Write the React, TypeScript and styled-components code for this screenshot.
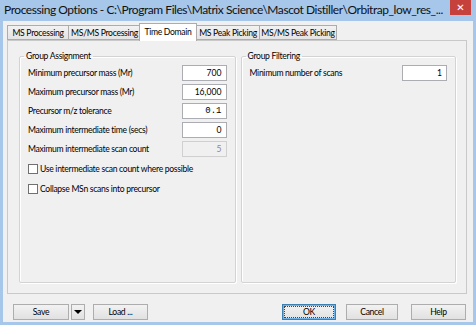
import React from "react";
import styled, { createGlobalStyle } from "styled-components";

const Global = createGlobalStyle`
  html, body { margin: 0; padding: 0; background: #fff; }
  body { font-family: Lato, "Open Sans", sans-serif; }
  * { box-sizing: border-box; }
`;

const Window = styled.div`
  width: 476px;
  height: 325px;
  background: #a6c6ea;
  display: flex;
  flex-direction: column;
  overflow: hidden;
`;

const TitleBar = styled.div`
  height: 21px;
  display: flex;
  align-items: flex-start;
  flex-shrink: 0;
`;

const Title = styled.div`
  flex: 1;
  padding: 1px 0 0 4px;
  font-family: Lato, sans-serif;
  font-size: 12px;
  letter-spacing: -0.45px;
  line-height: 18px;
  color: #111;
  white-space: nowrap;
  overflow: hidden;
`;

const CloseBtn = styled.div`
  width: 21px;
  height: 15px;
  margin-right: 5px;
  background: #c7413c;
  color: #fff;
  font-family: "DejaVu Sans", sans-serif;
  font-size: 10px;
  line-height: 15px;
  text-align: center;
  font-weight: bold;
`;

const Body = styled.div`
  flex: 1;
  margin: 0 3px 3px 3px;
  background: #f0f0f0;
  padding: 2px 6px 2px 4px;
  display: flex;
  flex-direction: column;
  font-size: 8.6px;
  letter-spacing: -0.3px;
  color: #000;
`;

const TabStrip = styled.div`
  display: flex;
  align-items: flex-end;
  height: 17px;
  position: relative;
  z-index: 1;
`;

const Tab = styled.div<{ $w: number; $active?: boolean }>`
  width: ${(p) => p.$w}px;
  height: ${(p) => (p.$active ? 18 : 15)}px;
  margin: ${(p) => (p.$active ? "0 -1px -1px -1px" : "0 -1px 0 0")};
  border: 1px solid #acacac;
  border-bottom: ${(p) => (p.$active ? "none" : "1px solid #acacac")};
  background: ${(p) => (p.$active ? "#fff" : "linear-gradient(#f2f2f2, #e4e4e4)")};
  display: flex;
  align-items: center;
  justify-content: center;
  padding-top: ${(p) => (p.$active ? "0" : "1px")};
  padding-bottom: ${(p) => (p.$active ? "2px" : "0")};
  white-space: nowrap;
  position: relative;
  z-index: ${(p) => (p.$active ? 2 : 1)};
`;

const Panel = styled.div`
  height: 254px;
  border: 1px solid #c9c9c9;
  background: #f0f0f0;
  display: flex;
  gap: 5px;
  padding: 9px 10px 10px 11px;
`;

const Group = styled.fieldset<{ $w: number }>`
  width: ${(p) => p.$w}px;
  margin: 0;
  border: 1px solid #d3d3d3;
  box-shadow: inset 1px 1px 0 #fff, 1px 1px 0 #fff;
  border-radius: 2px;
  padding: 1px 8px 0 8px;
  display: flex;
  flex-direction: column;
  gap: 2px;
`;

const Legend = styled.legend`
  padding: 0 2px;
  margin-left: -4px;
  line-height: 13px;
  font-size: 8.6px;
`;

const Row = styled.div`
  height: 17px;
  display: flex;
  align-items: center;
  justify-content: space-between;
  padding-top: 1px;
`;

const Field = styled.div<{ $w: number; $disabled?: boolean }>`
  width: ${(p) => p.$w}px;
  height: 16px;
  border: 1px solid ${(p) => (p.$disabled ? "#d0d0d0" : "#abadb3")};
  background: ${(p) => (p.$disabled ? "#f0f0f0" : "#fff")};
  color: ${(p) => (p.$disabled ? "#8a8a8a" : "#000")};
  text-align: right;
  padding-right: 4px;
  line-height: 14px;
  margin-top: -1px;
  letter-spacing: 0;
`;

const MonoField = styled(Field)`
  font-family: "Liberation Mono", "DejaVu Sans Mono", monospace;
  font-size: 9px;
`;

const CheckRow = styled.label`
  height: 20px;
  display: flex;
  align-items: center;
  gap: 2px;
`;

const CheckBoxes = styled.div`
  display: flex;
  flex-direction: column;
`;

const Box = styled.span`
  width: 10px;
  height: 10px;
  border: 1px solid #707070;
  background: #fff;
  display: inline-block;
`;

const Buttons = styled.div`
  margin-top: 10px;
  height: 16px;
  display: flex;
  align-items: stretch;
  padding-left: 6px;
  padding-right: 1px;
`;

const Btn = styled.div<{ $w: number; $gap?: number; $default?: boolean }>`
  width: ${(p) => p.$w}px;
  margin-left: ${(p) => p.$gap ?? 0}px;
  border: 1px solid ${(p) => (p.$default ? "#3c7fb1" : "#adadad")};
  background: linear-gradient(#f2f2f2, #e1e1e1);
  display: flex;
  align-items: center;
  justify-content: center;
  ${(p) =>
    p.$default
      ? `box-shadow: inset 0 0 0 1px #6fb3e8; outline: 1px dotted #444; outline-offset: -3px;`
      : ""}
`;

const Arrow = styled.div`
  width: 0;
  height: 0;
  border-left: 4px solid transparent;
  border-right: 4px solid transparent;
  border-top: 4px solid #000;
`;

const Spacer = styled.div`
  flex: 1;
`;

export default function App() {
  return (
    <>
      <Global />
      <Window>
        <TitleBar>
          <Title>
            Processing Options - C:\Program Files\Matrix Science\Mascot Distiller\Orbitrap_low_res_...
          </Title>
          <CloseBtn>✕</CloseBtn>
        </TitleBar>
        <Body>
          <TabStrip>
            <Tab $w={62}>MS Processing</Tab>
            <Tab $w={73}>MS/MS Processing</Tab>
            <Tab $w={58} $active>Time Domain</Tab>
            <Tab $w={64}>MS Peak Picking</Tab>
            <Tab $w={78}>MS/MS Peak Picking</Tab>
          </TabStrip>
          <Panel>
            <Group $w={217}>
              <Legend>Group Assignment</Legend>
              <Row>
                Minimum precursor mass (Mr)
                <Field $w={45}>700</Field>
              </Row>
              <Row>
                Maximum precursor mass (Mr)
                <Field $w={45}>16,000</Field>
              </Row>
              <Row>
                Precursor m/z tolerance
                <MonoField $w={45}>0.1</MonoField>
              </Row>
              <Row>
                Maximum intermediate time (secs)
                <Field $w={45}>0</Field>
              </Row>
              <Row>
                Maximum intermediate scan count
                <Field $w={45} $disabled>5</Field>
              </Row>
              <CheckBoxes>
                <CheckRow>
                  <Box />
                  Use intermediate scan count where possible
                </CheckRow>
                <CheckRow>
                  <Box />
                  Collapse MSn scans into precursor
                </CheckRow>
              </CheckBoxes>
            </Group>
            <Group $w={216}>
              <Legend>Group Filtering</Legend>
              <Row>
                Minimum number of scans
                <Field $w={45}>1</Field>
              </Row>
            </Group>
          </Panel>
          <Buttons>
            <Btn $w={56}>Save</Btn>
            <Btn $w={14} $gap={2}>
              <Arrow />
            </Btn>
            <Btn $w={55} $gap={8}>Load ...</Btn>
            <Spacer />
            <Btn $w={54} $default>
              OK
            </Btn>
            <Btn $w={52} $gap={10}>Cancel</Btn>
            <Btn $w={55} $gap={13}>Help</Btn>
          </Buttons>
        </Body>
      </Window>
    </>
  );
}
